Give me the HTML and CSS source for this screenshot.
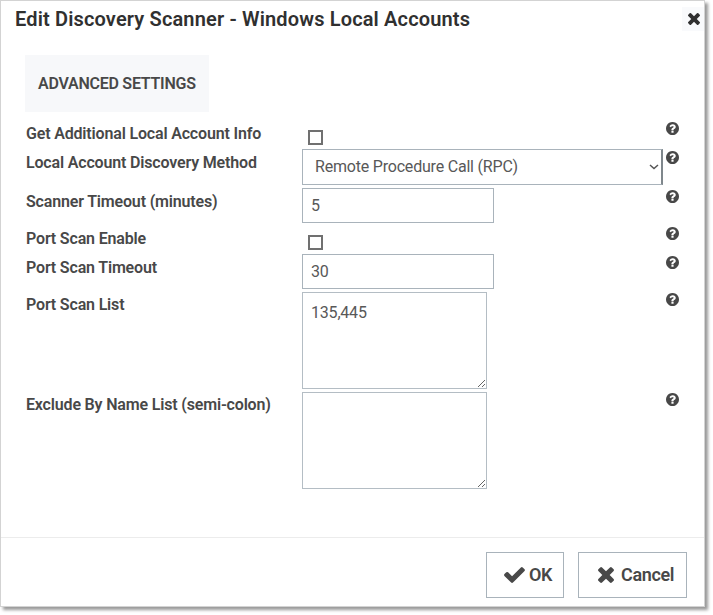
FILE: index.html
```html
<!DOCTYPE html>
<html lang="en">
<head>
<meta charset="utf-8">
<title>Edit Discovery Scanner</title>
<link rel="stylesheet" href="styles.css">
</head>
<body>
<svg width="0" height="0" class="sprite" aria-hidden="true">
  <symbol id="check" viewBox="121 334 1550 1188"><path d="M1671 566q0 40-28 68l-724 724-136 136q-28 28-68 28t-68-28l-136-136-362-362q-28-28-28-68t28-68l136-136q28-28 68-28t68 28l294 295 656-657q28-28 68-28t68 28l136 136q28 28 28 68z"/></symbol>
  <symbol id="times" viewBox="302 366 1188 1188"><path d="M1490 1322q0 40-28 68l-136 136q-28 28-68 28t-68-28l-294-294-294 294q-28 28-68 28t-68-28l-136-136q-28-28-28-68t28-68l294-294-294-294q-28-28-28-68t28-68l136-136q28-28 68-28t68 28l294 294 294-294q28-28 68-28t68 28l136 136q28 28 28 68t-28 68l-294 294 294 294q28 28 28 68z"/></symbol>
  <symbol id="help" viewBox="128 128 1536 1536"><path d="M1024 1376v-192q0-14-9-23t-23-9h-192q-14 0-23 9t-9 23v192q0 14 9 23t23 9h192q14 0 23-9t9-23zm256-672q0-88-55.500-163t-138.500-116-170-41q-243 0-371 213-15 24 8 42l132 100q7 6 19 6 16 0 25-12 53-68 86-92 34-24 86-24 48 0 85.500 26t37.500 59q0 38-20 61t-68 45q-63 28-115.500 86.500t-52.500 125.500v36q0 14 9 23t23 9h192q14 0 23-9t9-23q0-19 21.500-49.500t54.500-49.500q32-18 49-28.500t46-35 44.500-48 28-60.500 12.500-81zm384 192q0 209-103 385.500t-279.500 279.500-385.500 103-385.500-103-279.500-279.500-103-385.500 103-385.500 279.500-279.500 385.500-103 385.500 103 279.500 279.500 103 385.500z"/></symbol>
</svg>
<div class="dialog">
  <header class="header">
    <h1 class="title">Edit Discovery Scanner - Windows Local Accounts</h1>
    <button class="close" aria-label="Close"><svg><use href="#times"/></svg></button>
  </header>
  <main class="body">
    <div class="tab">ADVANCED SETTINGS</div>
    <div class="form">
      <label class="label">Get Additional Local Account Info</label>
      <div class="field"><span class="checkbox"></span></div>
      <svg class="help"><use href="#help"/></svg>

      <label class="label">Local Account Discovery Method</label>
      <div class="field"><div class="select"><span>Remote Procedure Call (RPC)</span><svg class="chevron" viewBox="0 0 10 6"><path d="M1 1l4 3.500L9 1"/></svg></div></div>
      <svg class="help"><use href="#help"/></svg>

      <label class="label">Scanner Timeout (minutes)</label>
      <div class="field"><input class="input" value="5"></div>
      <svg class="help"><use href="#help"/></svg>

      <label class="label">Port Scan Enable</label>
      <div class="field"><span class="checkbox"></span></div>
      <svg class="help"><use href="#help"/></svg>

      <label class="label">Port Scan Timeout</label>
      <div class="field"><input class="input" value="30"></div>
      <svg class="help"><use href="#help"/></svg>

      <label class="label">Port Scan List</label>
      <div class="field"><textarea class="area">135,445</textarea></div>
      <svg class="help"><use href="#help"/></svg>

      <label class="label">Exclude By Name List (semi-colon)</label>
      <div class="field"><textarea class="area"></textarea></div>
      <svg class="help"><use href="#help"/></svg>
    </div>
  </main>
  <footer class="footer">
    <button class="btn ok"><svg class="icon-check"><use href="#check"/></svg>OK</button>
    <button class="btn cancel"><svg class="icon-times"><use href="#times"/></svg>Cancel</button>
  </footer>
</div>
</body>
</html>
```
FILE: styles.css
```css
* { box-sizing: border-box; }
body {
  margin: 0;
  min-height: 615px;
  background: #fff;
  color: #484848;
  font: 16px/20px Roboto, "Liberation Sans", sans-serif;
}
svg { display: block; fill: currentColor; }
.sprite { position: absolute; }
.dialog {
  display: flex;
  flex-direction: column;
  width: 705px;
  height: 607px;
  border: 1px solid #d3d3d3;
  box-shadow: 3px 3px 3px rgba(0, 0, 0, .4);
}
.header {
  display: flex;
  justify-content: space-between;
  align-items: flex-start;
  height: 54px;
  padding: 6px 0 0 14px;
  color: #303030;
}
.title { margin: 0; font-size: 20px; line-height: 24px; font-weight: 600; letter-spacing: .15px; }
.close {
  display: flex;
  align-items: center;
  justify-content: center;
  width: 22px;
  height: 24px;
  padding: 0 0 0 1px;
  border: 0;
  background: #f9fafc;
  color: inherit;
}
.close svg { width: 12px; height: 12px; }
.body { flex: 1; padding-left: 24px; }
.tab {
  width: 184px;
  height: 57px;
  padding-left: 13px;
  background: #f7f8fa;
  line-height: 58px;
  font-weight: 600;
  letter-spacing: -.25px;
}
.form {
  display: grid;
  grid-template-columns: 277px 364px 13px;
  grid-template-rows: 29px 39px 37px 29px 37.500px 100px 100px;
  padding-top: 7px;
}
.label { padding: 4.500px 0 0 1px; font-weight: 600; letter-spacing: -.17px; }
.field { padding-top: 1px; }
.checkbox {
  display: block;
  width: 15px;
  height: 15px;
  margin: 10px 0 0 6px;
  border: 2px solid #707070;
}
.select {
  display: flex;
  align-items: center;
  justify-content: space-between;
  width: 361px;
  height: 36px;
  padding: 0 2px 0 12px;
  border: 1px solid #a9b3bb;
  border-right: 2px solid #7f878c;
  color: #585858;
  letter-spacing: -.2px;
}
.chevron { width: 10px; height: 6px; fill: none; stroke: #555; stroke-width: 1.5; }
.input, .area {
  display: block;
  border: 1px solid #a9b3bb;
  border-radius: 0;
  background: #fff;
  color: #585858;
  font: inherit;
  letter-spacing: -.2px;
  outline: none;
}
.input { width: 192px; height: 35px; padding: 0 8px; }
.area { width: 185px; height: 97px; padding: 10px 8px; border-color: #b4bdc4; resize: both; }
.help { width: 13px; height: 13px; margin-top: 2.500px; }
.footer {
  display: flex;
  justify-content: flex-end;
  gap: 14px;
  height: 69px;
  padding: 14px 17px 0 0;
  border-top: 1px solid #ececec;
}
.btn {
  display: flex;
  align-items: center;
  height: 46px;
  padding: 0;
  border: 1px solid #a9b3bb;
  background: #fff;
  color: #484848;
  font: 600 18px/20px Roboto, "Liberation Sans", sans-serif;
  letter-spacing: -.35px;
}
.ok { width: 78px; padding-left: 17px; gap: 4px; }
.cancel { width: 109px; padding-left: 19px; gap: 7px; }
.icon-check { width: 21px; height: 16px; }
.icon-times { width: 16px; height: 16px; }
```
